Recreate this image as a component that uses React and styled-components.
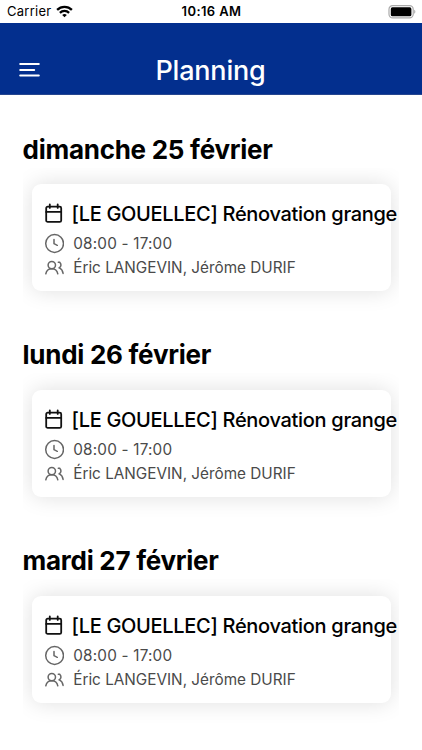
import React from 'react';
import styled, { createGlobalStyle } from 'styled-components';

const GlobalStyle = createGlobalStyle`
  * {
    box-sizing: border-box;
  }
  body {
    margin: 0;
    background: #fff;
    color: #000;
    font-family: Inter, 'Liberation Sans', sans-serif;
    overflow: hidden;
  }
`;

const Screen = styled.div`
  width: 422px;
  height: 750px;
  overflow: hidden;
  background: #fff;
`;

const StatusBar = styled.div`
  display: grid;
  grid-template-columns: 1fr auto 1fr;
  align-items: center;
  height: 23px;
  padding: 0 6px 0 7px;
  font-size: 13px;
  line-height: 23px;
`;

const Carrier = styled.div`
  display: flex;
  align-items: center;
  gap: 5px;
  letter-spacing: 0.25px;
`;

const Time = styled.div`
  font-weight: 600;
  letter-spacing: 0.4px;
`;

const Battery = styled.svg`
  justify-self: end;
`;

const Header = styled.header`
  display: grid;
  grid-template-columns: 40px 1fr 40px;
  align-items: center;
  height: 72px;
  padding: 24px 10px 0;
  background: #032f8e;
  border-bottom: 1px solid #26468f;
  color: #fff;
`;

const MenuButton = styled.button`
  display: flex;
  padding: 0 0 2px 9px;
  border: 0;
  background: none;
  color: inherit;
`;

const Title = styled.h1`
  margin: 0 1px 0 0;
  font-size: 27px;
  line-height: 34px;
  font-weight: 500;
  letter-spacing: -0.2px;
  text-align: center;
`;

const Planning = styled.main`
  padding: 36.5px 23px 0;
`;

const Day = styled.section`
  height: 205.8px;
`;

const DayTitle = styled.h2`
  margin: 0 0 0 -0.5px;
  font-size: 26px;
  line-height: 36px;
  font-weight: 700;
  letter-spacing: -0.26px;
  white-space: nowrap;
`;

/* the list clips the card shadow on its sides */
const Events = styled.div`
  padding: 16.6px 8.5px 22px;
  overflow: hidden;
`;

const Card = styled.article`
  height: 107px;
  padding: 17px 0 0 12.5px;
  border-radius: 9px;
  background: #fff;
  box-shadow: 0 0 22px rgba(0, 0, 0, 0.13);
`;

const Row = styled.div`
  display: flex;
  align-items: center;
  height: 24.2px;
  gap: 9.2px;
  color: #4a4a4a;
  font-size: 15.3px;
  letter-spacing: ${props => props.$spacing || 0}px;
  white-space: nowrap;
  svg {
    flex: none;
  }
`;

const TitleRow = styled(Row)`
  height: 30.3px;
  gap: 7.5px;
  color: #000;
  font-size: 20px;
  font-weight: 500;
  align-items: flex-start;
  line-height: 26px;
`;

const WifiIcon = () => (
  <svg width="17" height="13" viewBox="0 0 17 13" fill="none" stroke="#000" strokeWidth="2.3">
    <path d="M1.1 4.9C5.2.8 11.8.8 15.9 4.9" />
    <path d="M3.9 7.8c2.6-2.5 6.6-2.5 9.2 0" />
    <path d="M8.5 12.2 6.2 9.9c1.3-1.2 3.3-1.2 4.6 0z" fill="#000" stroke="none" />
  </svg>
);

const BatteryIcon = () => (
  <Battery width="28" height="14" viewBox="0 0 28 14">
    <rect x="1" y="0.7" width="24.2" height="12.2" rx="3.6" fill="#fff" stroke="#aaa" strokeWidth="1.2" />
    <rect x="2.8" y="2.3" width="20.6" height="9" rx="1.6" fill="#000" />
    <path d="M26.2 4.8c1.6.5 1.6 3.5 0 4z" fill="#aaa" />
  </Battery>
);

const MenuIcon = () => (
  <svg width="22" height="16" viewBox="0 0 22 16" stroke="#fff" strokeWidth="2" strokeLinecap="round">
    <path d="M1.2 2h18.6M1.2 7.9h14M1.2 13.6h18.6" />
  </svg>
);

const CalendarIcon = () => (
  <svg width="20" height="23" viewBox="0 0 20 23" fill="none" stroke="#111" strokeWidth="1.8" strokeLinecap="round">
    <rect x="2.2" y="5.7" width="15" height="15.2" rx="1.5" />
    <path d="M2.2 10.9h15M5.8 3.3v3.6M13.7 3.3v3.6" />
  </svg>
);

const ClockIcon = () => (
  <svg width="20" height="21" viewBox="0 0 20 21" fill="none" stroke="#666" strokeWidth="1.5" strokeLinecap="round">
    <circle cx="10.6" cy="10.5" r="8.9" />
    <path d="M10 6.4v4.3l3.3 1.6" strokeLinejoin="round" />
  </svg>
);

const UsersIcon = () => (
  <svg width="20" height="21" viewBox="0 0 20 21" fill="none" stroke="#666" strokeWidth="1.5" strokeLinecap="round">
    <circle cx="7.8" cy="8.1" r="3.7" />
    <path d="M1.8 16.8c.6-3 3-5 6-5s5.4 2 6 5" />
    <path d="M14.3 5.3h1.4c1.9 2 1.6 4-.4 5.6 2 .9 3.4 3 3.8 5.5" />
  </svg>
);

const EventCard = ({ title, hours, people }) => (
  <Card>
    <TitleRow $spacing={-0.31}>
      <CalendarIcon />
      <span>{title}</span>
    </TitleRow>
    <Row $spacing={0.2}>
      <ClockIcon />
      <span>{hours}</span>
    </Row>
    <Row>
      <UsersIcon />
      <span>{people}</span>
    </Row>
  </Card>
);

const days = ['dimanche 25 février', 'lundi 26 février', 'mardi 27 février'];

const App = () => (
  <Screen>
    <GlobalStyle />
    <StatusBar>
      <Carrier>
        Carrier
        <WifiIcon />
      </Carrier>
      <Time>10:16 AM</Time>
      <BatteryIcon />
    </StatusBar>
    <Header>
      <MenuButton aria-label="Menu">
        <MenuIcon />
      </MenuButton>
      <Title>Planning</Title>
    </Header>
    <Planning>
      {days.map(day => (
        <Day key={day}>
          <DayTitle>{day}</DayTitle>
          <Events>
            <EventCard
              title="[LE GOUELLEC] Rénovation grange"
              hours="08:00 - 17:00"
              people="Éric LANGEVIN, Jérôme DURIF"
            />
          </Events>
        </Day>
      ))}
    </Planning>
  </Screen>
);

export default App;
